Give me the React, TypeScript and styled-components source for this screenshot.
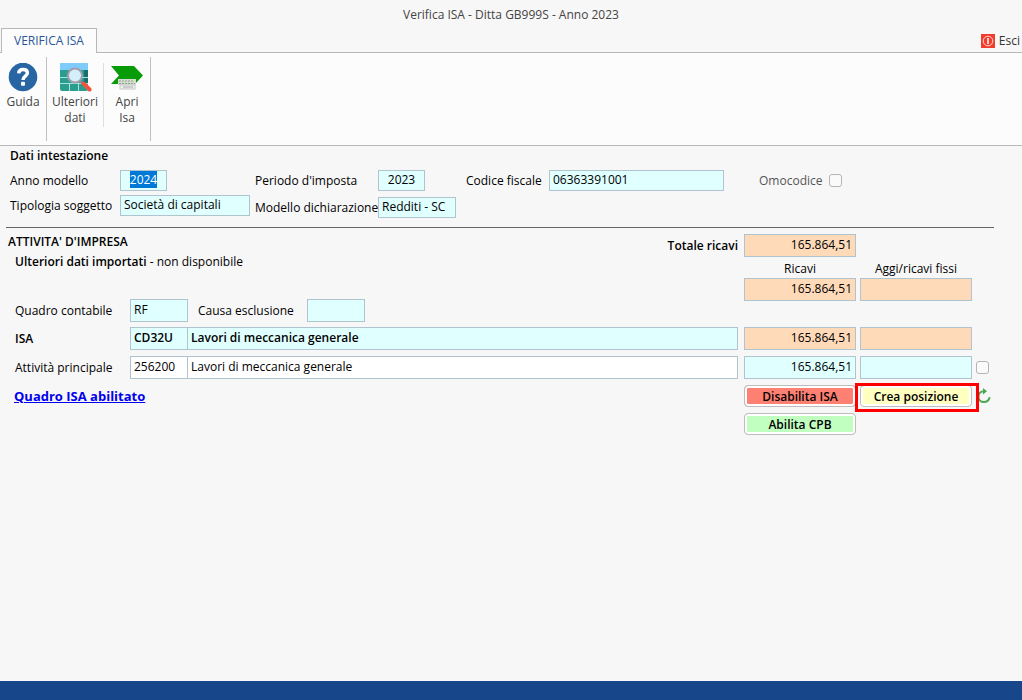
import React, { useEffect, useRef } from "react";
import styled, { createGlobalStyle } from "styled-components";

const GlobalStyle = createGlobalStyle`
  *, *::before, *::after { box-sizing: border-box; }
  body { margin: 0; background: #f7f7f7; }
  body, input, button {
    font-family: "Open Sans", "Noto Sans", sans-serif;
    font-size: 12px;
    line-height: 16px;
    color: #000;
  }
  strong { font-weight: 600; }
  svg { flex: none; }
`;

const Page = styled.div`
  display: flex;
  flex-direction: column;
  min-height: 100vh;
`;

const TitleBar = styled.h1`
  margin: 0;
  height: 28px;
  padding-top: 7px;
  font-size: 12px;
  font-weight: 400;
  text-align: center;
  color: #444;
`;

const TabBar = styled.nav`
  display: flex;
  justify-content: space-between;
  align-items: center;
  height: 25px;
  padding: 0 2px 0 1px;
  border-bottom: 1px solid #b8b8b8;
`;

const Tab = styled.button`
  height: 25px;
  width: 96px;
  margin-bottom: -1px;
  padding: 0;
  border: 1px solid #b8b8b8;
  border-bottom: 0;
  background: #fcfcfc;
  color: #2b579a;
  white-space: nowrap;
`;

const ExitButton = styled.button`
  display: flex;
  align-items: center;
  gap: 4px;
  padding: 1px 0 0;
  border: 0;
  background: none;
  color: #333;
`;

const Ribbon = styled.div`
  display: flex;
  height: 93px;
  padding: 4px 0;
  border-bottom: 1px solid #b8b8b8;
  background: #fcfcfc;
`;

const RibbonGroup = styled.div`
  display: flex;
  border-right: 1px solid #c0c0c0;
`;

const RibbonButton = styled.button<{ $width: number; $divided?: boolean }>`
  display: flex;
  flex-direction: column;
  align-items: center;
  gap: 1px;
  width: ${(p) => p.$width}px;
  height: 64px;
  margin-top: 6px;
  padding: 0;
  border: 0;
  border-right: ${(p) => (p.$divided ? "1px solid #dedede" : "0")};
  background: none;
  color: #444;
`;

const HeaderForm = styled.section`
  padding: 2px 10px 9px;
`;

const Heading = styled.h2`
  margin: 0;
  font-size: 12px;
  line-height: 16px;
  font-weight: 600;
`;

const FormColumns = styled.div`
  display: flex;
  align-items: flex-start;
  margin-top: 6px;
`;

const FormColumn = styled.div<{ $width: number; $gap?: number }>`
  display: flex;
  flex-direction: column;
  gap: ${(p) => p.$gap || 0}px;
  flex: 0 0 ${(p) => p.$width}px;
`;

const FieldRow = styled.div`
  display: flex;
  align-items: center;
`;

const Label = styled.label<{ $width?: number; $bold?: boolean; $muted?: boolean }>`
  flex: none;
  width: ${(p) => (p.$width ? p.$width + "px" : "auto")};
  white-space: nowrap;
  font-weight: ${(p) => (p.$bold ? 600 : 400)};
  color: ${(p) => (p.$muted ? "#555" : "#000")};
`;

const tones = { aqua: "#e0ffff", peach: "#ffdab9", white: "#ffffff" };

const Field = styled.input<{
  $width?: number;
  $tone?: keyof typeof tones;
  $align?: string;
  $bold?: boolean;
  $tall?: boolean;
  $joined?: boolean;
}>`
  flex: ${(p) => (p.$width ? "none" : "1 1 0")};
  width: ${(p) => (p.$width ? p.$width + "px" : "auto")};
  min-width: 0;
  height: ${(p) => (p.$tall ? 23 : 21)}px;
  margin-left: ${(p) => (p.$joined ? -1 : 0)}px;
  padding: 0 3px 2px;
  border: 1px solid #b0c4d0;
  border-radius: 0;
  outline: none;
  background: ${(p) => tones[p.$tone || "aqua"]};
  text-align: ${(p) => p.$align || "left"};
  font-weight: ${(p) => (p.$bold ? 600 : 400)};

  &::selection {
    background: #0078d7;
    color: #fff;
  }
`;

const Checkbox = styled.input`
  appearance: none;
  flex: none;
  width: 13px;
  height: 13px;
  margin: 0;
  border: 1px solid #b4b4b4;
  border-radius: 3px;
  background: #fafafa;
`;

const Omocodice = styled.div`
  display: flex;
  align-items: center;
  gap: 6px;
  height: 21px;
`;

const Rule = styled.hr`
  width: auto;
  height: 1px;
  margin: 0 28px 0 6px;
  border: 0;
  background: #666;
`;

const Activity = styled.main`
  flex: 1;
  padding: 6px 28px 0 8px;
`;

const Overview = styled.div`
  display: flex;
  justify-content: space-between;
  height: 88px;
`;

const Summary = styled.div`
  flex: none;
`;

const Imported = styled.p`
  margin: 4px 0 29px;
  padding-left: 7px;
`;

const Totals = styled.div`
  display: grid;
  grid-template-columns: auto 112px 112px 18px;
  grid-template-rows: 23px 21px 23px;
  column-gap: 4px;
  align-items: center;
  align-content: start;
`;

const TotalLabel = styled(Label)`
  padding-right: 2px;
`;

const ColumnTitle = styled.span<{ $column: number }>`
  grid-column: ${(p) => p.$column};
  padding-top: 2px;
  text-align: center;
  white-space: nowrap;
`;

const MiddleField = styled(Field)`
  grid-column: 2;
`;

const Lines = styled.div`
  display: grid;
  grid-template-columns: minmax(0, 1fr) 112px 112px 18px;
  column-gap: 4px;
  row-gap: 6px;
  align-items: center;
  margin-top: 5px;
`;

const Line = styled.div`
  display: flex;
  align-items: center;
  padding: 0 2px 0 7px;
`;

const StatusLink = styled.a`
  justify-self: start;
  margin-left: 6px;
  font-size: 13px;
  font-weight: 700;
  color: #0000ee;
  text-decoration: underline;
`;

const ActionButton = styled.button<{ $fill: string }>`
  display: block;
  width: 100%;
  height: 22px;
  padding: 2px 0 0;
  border: 1px solid #bdbdbd;
  border-radius: 4px;
  background: ${(p) => p.$fill};
  box-shadow: inset 0 0 0 2px #fff;
  font-weight: 600;
  white-space: nowrap;
`;

const Highlighted = styled.div`
  position: relative;

  &::after {
    content: "";
    position: absolute;
    inset: -2px -7px -5px -5px;
    border: 3px solid #ff0000;
    pointer-events: none;
  }
`;

const RefreshButton = styled.button`
  display: flex;
  padding: 0;
  border: 0;
  background: none;
`;

const CpbCell = styled.div`
  grid-column: 2;
`;

const Footer = styled.footer`
  height: 19px;
  background: #17478a;
`;

const HelpIcon = () => (
  <svg width="32" height="30" viewBox="0 0 32 30" aria-hidden="true">
    <circle cx="16" cy="14" r="14.3" fill="#2866a3" />
    <path d="M11.7 10.4C11.8 7.8 13.5 6.5 16.1 6.5C18.8 6.5 20.4 8 20.4 10C20.4 13.2 16 13.2 16 17" fill="none" stroke="#fff" strokeWidth="3.4" />
    <rect x="14" y="18.8" width="4" height="4" rx="1" fill="#fff" />
  </svg>
);

const DataIcon = () => (
  <svg width="34" height="30" viewBox="0 0 34 30" aria-hidden="true">
    <rect x="2" y="0" width="28" height="28" rx="2" fill="#2a9d8f" />
    <path d="M2 7V2a2 2 0 0 1 2-2h24a2 2 0 0 1 2 2v5z" fill="#7fccfb" />
    <path d="M26 7h4v13h-4z" fill="#16706f" />
    <path d="M2 14.500h8M24 14.500h6M2 20.500h28M11.500 20v8M20.500 20v8" stroke="#a8e4dc" strokeWidth="1" />
    <path d="M22 18l3 3" stroke="#8b8794" strokeWidth="2" />
    <circle cx="17" cy="12.500" r="7" fill="#d4effa" stroke="#a29eac" strokeWidth="2" />
    <path d="M25.500 20.500l6 6" stroke="#f05540" strokeWidth="4" strokeLinecap="round" />
  </svg>
);

const OpenIcon = () => (
  <svg width="34" height="30" viewBox="0 0 34 30" aria-hidden="true">
    <path d="M1 3H24L33 12.500L25 21H1L9 12.500Z" fill="#079b07" />
    <rect x="8" y="16" width="18" height="6" fill="#d4ddd0" />
    <path d="M9 18h15M9 20.500h16" stroke="#8da58a" strokeDasharray="2 1" />
    <rect x="10" y="22" width="15" height="4" fill="#eee" stroke="#c8c8c8" />
    <path d="M13 24h10" stroke="#aaa" />
  </svg>
);

const ExitIcon = () => (
  <svg width="14" height="14" viewBox="0 0 14 14" aria-hidden="true">
    <rect width="14" height="14" fill="#f23c2e" />
    <circle cx="7" cy="7" r="4.800" fill="none" stroke="#ffd5d0" />
    <path d="M7 4v6" stroke="#fff" strokeWidth="1.500" />
  </svg>
);

const RefreshIcon = () => (
  <svg width="16" height="18" viewBox="0 0 16 18" aria-hidden="true">
    <path d="M8 4.200C4.700 4.200 2.500 6.600 2.500 9.500C2.500 12.700 4.800 15 7.800 15C10.800 15 13 13 13.700 10.200" fill="none" stroke="#4aa84e" strokeWidth="2" />
    <path d="M7 1L11 4.200L7 7.500Z" fill="#4aa84e" />
  </svg>
);

export default function App() {
  const yearRef = useRef<HTMLInputElement>(null);

  useEffect(() => {
    yearRef.current?.focus();
    yearRef.current?.select();
  }, []);

  return (
    <Page>
      <GlobalStyle />
      <TitleBar>Verifica ISA - Ditta GB999S - Anno 2023</TitleBar>
      <TabBar>
        <Tab type="button">VERIFICA ISA</Tab>
        <ExitButton type="button"><ExitIcon />Esci</ExitButton>
      </TabBar>
      <Ribbon>
        <RibbonGroup>
          <RibbonButton type="button" $width={46}><HelpIcon />Guida</RibbonButton>
        </RibbonGroup>
        <RibbonGroup>
          <RibbonButton type="button" $width={57} $divided><DataIcon /><span>Ulteriori<br />dati</span></RibbonButton>
          <RibbonButton type="button" $width={46}><OpenIcon /><span>Apri<br />Isa</span></RibbonButton>
        </RibbonGroup>
      </Ribbon>

      <HeaderForm>
        <Heading>Dati intestazione</Heading>
        <FormColumns>
          <FormColumn $width={245} $gap={4}>
            <FieldRow>
              <Label $width={110} htmlFor="anno">Anno modello</Label>
              <Field id="anno" ref={yearRef} $width={47} $align="center" defaultValue="2024" />
            </FieldRow>
            <FieldRow>
              <Label $width={110} htmlFor="tipologia">Tipologia soggetto</Label>
              <Field id="tipologia" $width={130} defaultValue="Società di capitali" />
            </FieldRow>
          </FormColumn>
          <FormColumn $width={211} $gap={6}>
            <FieldRow>
              <Label $width={123} htmlFor="periodo">Periodo d'imposta</Label>
              <Field id="periodo" $width={47} $align="center" defaultValue="2023" />
            </FieldRow>
            <FieldRow>
              <Label $width={123} htmlFor="modello">Modello dichiarazione</Label>
              <Field id="modello" $width={78} defaultValue="Redditi - SC" />
            </FieldRow>
          </FormColumn>
          <FormColumn $width={293}>
            <FieldRow>
              <Label $width={83} htmlFor="codice">Codice fiscale</Label>
              <Field id="codice" $width={175} defaultValue="06363391001" />
            </FieldRow>
          </FormColumn>
          <Omocodice>
            <Label $muted htmlFor="omocodice">Omocodice</Label>
            <Checkbox id="omocodice" type="checkbox" />
          </Omocodice>
        </FormColumns>
      </HeaderForm>

      <Rule />

      <Activity>
        <Overview>
          <Summary>
            <Heading>ATTIVITA' D'IMPRESA</Heading>
            <Imported><strong>Ulteriori dati importati</strong> - non disponibile</Imported>
            <Line>
              <Label $width={115} htmlFor="quadro">Quadro contabile</Label>
              <Field id="quadro" $tall $width={58} defaultValue="RF" />
              <FormColumn $width={10} />
              <Label $width={109} htmlFor="causa">Causa esclusione</Label>
              <Field id="causa" $tall $width={58} />
            </Line>
          </Summary>
          <Totals>
            <TotalLabel $bold htmlFor="totale">Totale ricavi</TotalLabel>
            <Field id="totale" $tall $width={112} $tone="peach" $align="right" defaultValue="165.864,51" />
            <ColumnTitle $column={2}>Ricavi</ColumnTitle>
            <ColumnTitle $column={3}>Aggi/ricavi fissi</ColumnTitle>
            <MiddleField aria-label="Ricavi" $tall $width={112} $tone="peach" $align="right" defaultValue="165.864,51" />
            <Field aria-label="Aggi/ricavi fissi" $tall $width={112} $tone="peach" $align="right" />
          </Totals>
        </Overview>

        <Lines>
          <Line>
            <Label $width={115} $bold htmlFor="isa">ISA</Label>
            <Field id="isa" $tall $width={58} $bold defaultValue="CD32U" />
            <Field aria-label="Descrizione ISA" $tall $joined $bold defaultValue="Lavori di meccanica generale" />
          </Line>
          <Field aria-label="Ricavi ISA" $tall $width={112} $tone="peach" $align="right" defaultValue="165.864,51" />
          <Field aria-label="Aggi ISA" $tall $width={112} $tone="peach" $align="right" />
          <span />

          <Line>
            <Label $width={115} htmlFor="attivita">Attività principale</Label>
            <Field id="attivita" $tall $width={58} $tone="white" defaultValue="256200" />
            <Field aria-label="Descrizione attività" $tall $joined $tone="white" defaultValue="Lavori di meccanica generale" />
          </Line>
          <Field aria-label="Ricavi attività" $tall $width={112} $align="right" defaultValue="165.864,51" />
          <Field aria-label="Aggi attività" $tall $width={112} $align="right" />
          <Checkbox type="checkbox" aria-label="Seleziona attività" />

          <StatusLink href="#quadro">Quadro ISA abilitato</StatusLink>
          <ActionButton type="button" $fill="#fe8072">Disabilita ISA</ActionButton>
          <Highlighted>
            <ActionButton type="button" $fill="#ffffc0">Crea posizione</ActionButton>
          </Highlighted>
          <RefreshButton type="button" aria-label="Aggiorna"><RefreshIcon /></RefreshButton>

          <CpbCell>
            <ActionButton type="button" $fill="#c0ffc0">Abilita CPB</ActionButton>
          </CpbCell>
        </Lines>
      </Activity>
      <Footer />
    </Page>
  );
}
